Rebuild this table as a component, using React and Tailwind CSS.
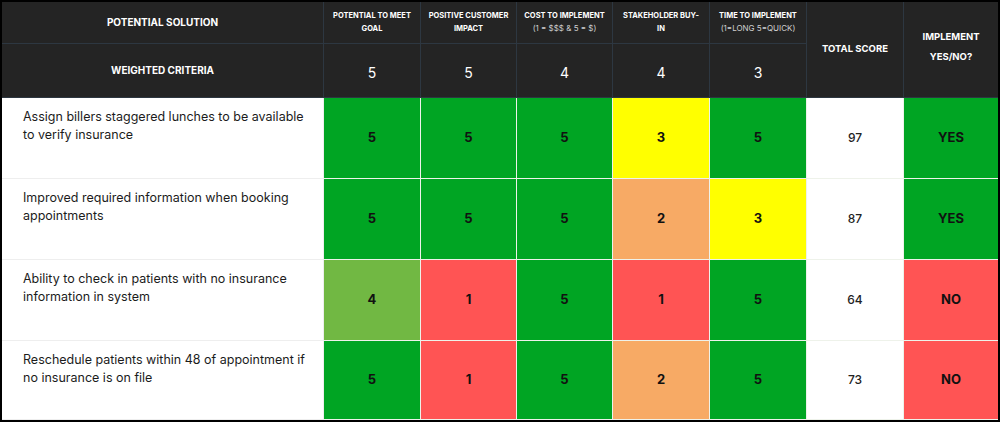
import React from 'react';

// Criteria header + weights
const criteria = [
  { title: 'POTENTIAL TO MEET', title2: 'GOAL', weight: 5 },
  { title: 'POSITIVE CUSTOMER', title2: 'IMPACT', weight: 5 },
  { title: 'COST TO IMPLEMENT', note: '(1 = $$$ & 5 = $)', weight: 4 },
  { title: 'STAKEHOLDER BUY-', title2: 'IN', weight: 4 },
  { title: 'TIME TO IMPLEMENT', note: '(1=LONG 5=QUICK)', weight: 3 },
];

// description lines are split the way the sheet wraps them
const rows = [
  { lines: ['Assign billers staggered lunches to be available', 'to verify insurance'], scores: [5, 5, 5, 3, 5], total: 97, yes: true },
  { lines: ['Improved required information when booking', 'appointments'], scores: [5, 5, 5, 2, 3], total: 87, yes: true },
  { lines: ['Ability to check in patients with no insurance', 'information in system'], scores: [4, 1, 5, 1, 5], total: 64, yes: false },
  { lines: ['Reschedule patients within 48 of appointment if', 'no insurance is on file'], scores: [5, 1, 5, 2, 5], total: 73, yes: false },
];

// colour per score value
const scoreBg = {
  1: 'bg-[#ff5454]',
  2: 'bg-[#f7aa65]',
  3: 'bg-[#ffff00]',
  4: 'bg-[#71b843]',
  5: 'bg-[#00a523]',
};

const head = 'bg-[#242424] border-r border-b border-[#2d3741] text-white flex flex-col items-center justify-center text-center';
const cell = 'border-r border-b border-[#eef2ea] flex items-center justify-center';

export default function App() {
  return (
    <div
      className="w-[1000px] h-[422px] border-2 border-black bg-white overflow-hidden"
      style={{ fontFamily: 'Inter, "Open Sans", sans-serif' }}
    >
      <div className="grid grid-cols-[322px_97px_96px_96px_97px_97px_97px_1fr] grid-rows-[42px_54px_81px_81px_81px_1fr] h-full">
        {/* header row 1 */}
        <div className={`${head} text-[10px] font-bold`}>POTENTIAL SOLUTION</div>
        {criteria.map((c) => (
          <div key={c.title} className={`${head} justify-start pt-[7px] px-[2px] text-[7.5px] font-bold leading-[13px] whitespace-nowrap`}>
            <span>{c.title}</span>
            {c.note ? (
              <span className="font-normal text-[#d0d0d0] text-[8px]">{c.note}</span>
            ) : (
              <span>{c.title2}</span>
            )}
          </div>
        ))}
        <div className={`${head} row-span-2 text-[9.5px] font-bold`}>TOTAL SCORE</div>
        <div className={`${head} row-span-2 border-r-0 text-[9.5px] font-bold leading-[20px] pb-[6px]`}>
          <span>IMPLEMENT</span>
          <span>YES/NO?</span>
        </div>

        {/* header row 2 */}
        <div className={`${head} text-[10px] font-bold`}>WEIGHTED CRITERIA</div>
        {criteria.map((c) => (
          <div key={c.title + 'w'} className={`${head} text-[14px] pt-[4px]`}>{c.weight}</div>
        ))}

        {/* data rows */}
        {rows.map((r) => (
          <React.Fragment key={r.lines[0]}>
            <div className="border-r border-b border-[#eeeeee] pl-[21px] pt-[10px] text-[12.5px] leading-[18px] text-[#1c1c1c] whitespace-nowrap">
              {r.lines.map((l) => (
                <div key={l}>{l}</div>
              ))}
            </div>
            {r.scores.map((s, i) => (
              <div key={i} className={`${cell} ${scoreBg[s]} text-[13px] font-bold text-[#111]`}>{s}</div>
            ))}
            <div className={`${cell} bg-white border-[#eeeeee] text-[12px] font-medium text-[#222]`}>{r.total}</div>
            <div className={`${cell} border-r-0 ${r.yes ? 'bg-[#00a523]' : 'bg-[#ff5454]'} text-[13px] font-bold text-[#111]`}>
              {r.yes ? 'YES' : 'NO'}
            </div>
          </React.Fragment>
        ))}
      </div>
    </div>
  );
}
